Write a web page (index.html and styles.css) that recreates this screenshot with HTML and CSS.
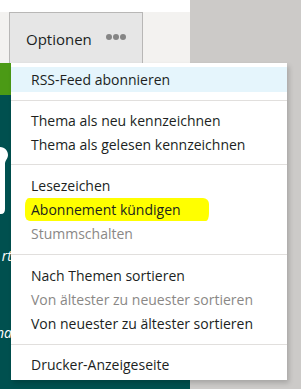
FILE: index.html
```html
<!DOCTYPE html>
<html lang="de">
<head>
<meta charset="utf-8">
<link rel="stylesheet" href="styles.css">
</head>
<body>
<div class="page">
  <div class="main">
    <div class="topstrip"></div>
    <div class="toolbar">
      <button class="options-btn">
        <span class="options-label">Optionen</span>
        <span class="dots"><i></i><i></i><i></i></span>
      </button>
    </div>
    <div class="green"></div>
    <div class="teal">
      <svg class="logo-part" width="12" height="70" viewBox="0 0 12 70">
        <path d="M0 0 C5 0 8 4 8 8 C8 12 5 13 5 17 L5 62 Q5 67 1 67 L0 67 Z" fill="#ffffff"/>
      </svg>
      <div class="ghost ghost-1">rt</div>
      <div class="ghost ghost-2">na</div>
    </div>
  </div>
  <div class="side"></div>

  <div class="menu">
    <div class="section first">
      <div class="item hover">RSS-Feed abonnieren</div>
    </div>
    <div class="section tight">
      <div class="item">Thema als neu kennzeichnen</div>
      <div class="item">Thema als gelesen kennzeichnen</div>
    </div>
    <div class="section">
      <div class="item">Lesezeichen</div>
      <div class="item"><span class="mark">Abonnement kündigen</span></div>
      <div class="item disabled">Stummschalten</div>
    </div>
    <div class="section">
      <div class="item">Nach Themen sortieren</div>
      <div class="item disabled">Von ältester zu neuester sortieren</div>
      <div class="item">Von neuester zu ältester sortieren</div>
    </div>
    <div class="section last">
      <div class="item">Drucker-Anzeigeseite</div>
    </div>
  </div>
</div>
</body>
</html>
```
FILE: styles.css
```css
* { box-sizing: border-box; }
html, body { margin: 0; padding: 0; }
body {
  font-family: "Open Sans", "Noto Sans", sans-serif;
  background: #cccac8;
  width: 301px;
  height: 389px;
  overflow: hidden;
}
.page {
  position: relative;
  display: flex;
  height: 389px;
}
.main {
  width: 190px;
  display: flex;
  flex-direction: column;
}
.side {
  flex: 1;
  background: #cccac8;
}
.topstrip {
  height: 12px;
  background: #ffffff;
}
.toolbar {
  height: 51px;
  background: #f3f2f0;
  padding-left: 9px;
  display: flex;
}
.options-btn {
  width: 134px;
  height: 51px;
  margin: 0;
  border: 1px solid #b8b7b6;
  border-bottom: none;
  background: #e6e6e6;
  display: flex;
  align-items: center;
  padding: 0 0 0 16px;
  font-family: inherit;
  font-size: 15px;
  color: #201f1e;
  cursor: pointer;
}
.options-label { margin-top: 2px; }
.dots {
  display: flex;
  gap: 1px;
  margin-left: 14px;
  margin-top: -3px;
}
.dots i {
  width: 6px;
  height: 6px;
  border-radius: 50%;
  background: #858585;
}
.green {
  height: 32px;
  background: #4b9a15;
}
.teal {
  flex: 1;
  background: #00504f;
  overflow: hidden;
  display: flex;
  flex-direction: column;
  padding-top: 52px;
}
.logo-part { display: block; }
.ghost {
  width: 12px;
  display: flex;
  justify-content: flex-end;
  white-space: nowrap;
  color: #ffffff;
  font-style: italic;
  font-size: 14px;
  line-height: 20px;
}
.ghost-1 { margin-top: 29px; }
.ghost-2 { margin-top: 57px; }

.menu {
  position: absolute;
  left: 11px;
  top: 63px;
  width: 276px;
  background: #ffffff;
  box-shadow: 2px 3px 5px rgba(0, 0, 0, 0.18);
  color: #201f1e;
  font-size: 14px;
}
.section {
  padding: 9px 0 8px;
  border-top: 1px solid #e1dfdd;
}
.section.first {
  padding: 4px 0 8px;
  border-top: none;
}
.section.tight { padding: 8px 0 7px; }
.section.last { padding: 8px 0 3px; }
.item {
  height: 24px;
  line-height: 24px;
  padding-left: 20px;
  white-space: nowrap;
}
.item.hover {
  height: 25px;
  line-height: 25px;
  background: #e5f5fc;
}
.item.disabled { color: #8a8886; }
.mark {
  display: inline-block;
  width: 184px;
  line-height: 23px;
  background: #ffff00;
  margin-left: -6px;
  padding: 0 0 0 6px;
  border-radius: 4px 6px 3px 5px / 8px 6px 8px 6px;
}
```
